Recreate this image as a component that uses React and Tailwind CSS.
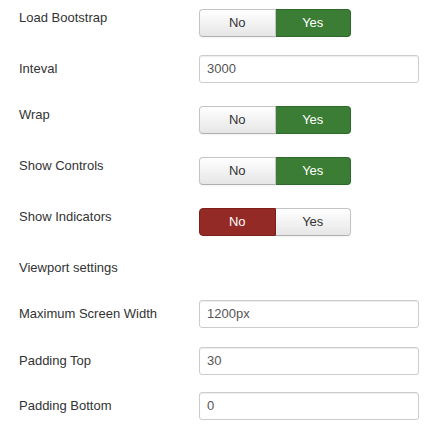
import React from 'react';

const Toggle = ({ value }) => {
  const off = 'bg-gradient-to-b from-white to-[#e6e6e6] text-[#333] border-[#c4c4c4] border-b-[#b0b0b0] shadow-[inset_0_1px_0_rgba(255,255,255,0.2),0_1px_2px_rgba(0,0,0,0.05)]';
  const yesOn = 'bg-[#3b7d35] text-white border-[#2e6a2a]';
  const noOn = 'bg-[#942a25] text-white border-[#7d211d]';

  return (
    <div className="flex h-[28px] w-[152px]">
      <div
        className={`flex-1 flex items-center justify-center border rounded-l-[4px] ${value ? off : noOn}`}
      >
        No
      </div>
      <div
        className={`flex-1 flex items-center justify-center border border-l-0 rounded-r-[4px] ${value ? yesOn : off}`}
      >
        Yes
      </div>
    </div>
  );
};

const TextInput = ({ value }) => (
  <div className="h-[28px] w-[220px] flex items-center px-[7px] border border-[#cccccc] rounded-[3px] bg-white text-[#555] shadow-[inset_0_1px_1px_rgba(0,0,0,0.075)]">
    {value}
  </div>
);

const ToggleRow = ({ label, value, className }) => (
  <div className={`flex items-start ${className}`}>
    <div className="w-[199px] shrink-0 pl-[19px] leading-[18px]">{label}</div>
    <Toggle value={value} />
  </div>
);

const InputRow = ({ label, value, className }) => (
  <div className={`flex items-center ${className}`}>
    <div className="w-[199px] shrink-0 pl-[19px] leading-[18px]">{label}</div>
    <TextInput value={value} />
  </div>
);

const App = () => {
  return (
    <div className="w-[442px] h-[425px] bg-white pt-[9px] text-[13px] text-[#333] font-['Liberation_Sans',Arial,sans-serif]">
      <ToggleRow label="Load Bootstrap" value={true} />
      <InputRow label="Inteval" value="3000" className="mt-[18px]" />
      <ToggleRow label="Wrap" value={true} className="mt-[23px]" />
      <ToggleRow label="Show Controls" value={true} className="mt-[23px]" />
      <ToggleRow label="Show Indicators" value={false} className="mt-[23px]" />

      <div className="mt-[23px] pl-[19px] leading-[18px]">Viewport settings</div>

      <InputRow label="Maximum Screen Width" value="1200px" className="mt-[23px]" />
      <InputRow label="Padding Top" value="30" className="mt-[19px]" />
      <InputRow label="Padding Bottom" value="0" className="mt-[17px]" />
    </div>
  );
};

export default App;
